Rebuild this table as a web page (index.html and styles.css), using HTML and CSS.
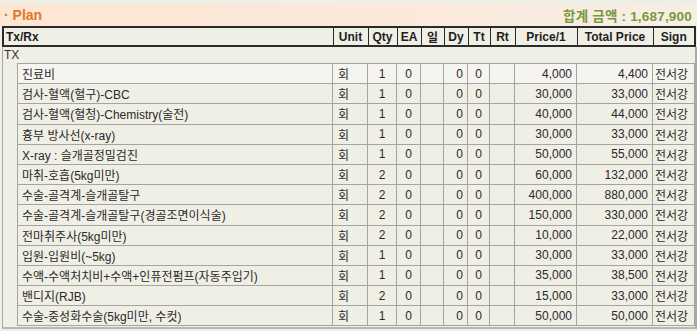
FILE: index.html
```html
<!DOCTYPE html>
<html lang="ko">
<head>
<meta charset="utf-8">
<link rel="stylesheet" href="styles.css">
</head>
<body>
<div class="panel">
  <div class="titlebar">
    <span class="title"><span class="dot">·</span> Plan</span>
    <span class="total">합계 금액 : 1,687,900</span>
  </div>
  <table class="head">
    <colgroup>
      <col class="c-name"><col class="c-unit"><col class="c-qty"><col class="c-ea"><col class="c-il"><col class="c-dy"><col class="c-tt"><col class="c-rt"><col class="c-price"><col class="c-total"><col class="c-sign">
    </colgroup>
    <tr>
      <th class="left">Tx/Rx</th><th>Unit</th><th>Qty</th><th>EA</th><th>일</th><th>Dy</th><th>Tt</th><th>Rt</th><th>Price/1</th><th>Total Price</th><th>Sign</th>
    </tr>
  </table>
  <div class="group">
    <div class="group-label">TX</div>
    <table class="items">
      <colgroup>
        <col class="c-name2"><col class="c-unit"><col class="c-qty"><col class="c-ea"><col class="c-il"><col class="c-dy"><col class="c-tt"><col class="c-rt"><col class="c-price"><col class="c-total"><col class="c-sign">
      </colgroup>
      <tbody>
        <tr class="hl"><td class="name">진료비</td><td class="unit">회</td><td class="ctr">1</td><td class="ctr">0</td><td></td><td class="num">0</td><td class="ctr">0</td><td></td><td class="num">4,000</td><td class="num">4,400</td><td class="sign">전서강</td></tr>
        <tr><td class="name">검사-혈액(혈구)-CBC</td><td class="unit">회</td><td class="ctr">1</td><td class="ctr">0</td><td></td><td class="num">0</td><td class="ctr">0</td><td></td><td class="num">30,000</td><td class="num">33,000</td><td class="sign">전서강</td></tr>
        <tr><td class="name">검사-혈액(혈청)-Chemistry(술전)</td><td class="unit">회</td><td class="ctr">1</td><td class="ctr">0</td><td></td><td class="num">0</td><td class="ctr">0</td><td></td><td class="num">40,000</td><td class="num">44,000</td><td class="sign">전서강</td></tr>
        <tr><td class="name">흉부 방사선(x-ray)</td><td class="unit">회</td><td class="ctr">1</td><td class="ctr">0</td><td></td><td class="num">0</td><td class="ctr">0</td><td></td><td class="num">30,000</td><td class="num">33,000</td><td class="sign">전서강</td></tr>
        <tr><td class="name">X-ray : 슬개골정밀검진</td><td class="unit">회</td><td class="ctr">1</td><td class="ctr">0</td><td></td><td class="num">0</td><td class="ctr">0</td><td></td><td class="num">50,000</td><td class="num">55,000</td><td class="sign">전서강</td></tr>
        <tr><td class="name">마취-호흡(5kg미만)</td><td class="unit">회</td><td class="ctr">2</td><td class="ctr">0</td><td></td><td class="num">0</td><td class="ctr">0</td><td></td><td class="num">60,000</td><td class="num">132,000</td><td class="sign">전서강</td></tr>
        <tr><td class="name">수술-골격계-슬개골탈구</td><td class="unit">회</td><td class="ctr">2</td><td class="ctr">0</td><td></td><td class="num">0</td><td class="ctr">0</td><td></td><td class="num">400,000</td><td class="num">880,000</td><td class="sign">전서강</td></tr>
        <tr><td class="name">수술-골격계-슬개골탈구(경골조면이식술)</td><td class="unit">회</td><td class="ctr">2</td><td class="ctr">0</td><td></td><td class="num">0</td><td class="ctr">0</td><td></td><td class="num">150,000</td><td class="num">330,000</td><td class="sign">전서강</td></tr>
        <tr><td class="name">전마취주사(5kg미만)</td><td class="unit">회</td><td class="ctr">2</td><td class="ctr">0</td><td></td><td class="num">0</td><td class="ctr">0</td><td></td><td class="num">10,000</td><td class="num">22,000</td><td class="sign">전서강</td></tr>
        <tr><td class="name">입원-입원비(~5kg)</td><td class="unit">회</td><td class="ctr">1</td><td class="ctr">0</td><td></td><td class="num">0</td><td class="ctr">0</td><td></td><td class="num">30,000</td><td class="num">33,000</td><td class="sign">전서강</td></tr>
        <tr><td class="name">수액-수액처치비+수액+인퓨전펌프(자동주입기)</td><td class="unit">회</td><td class="ctr">1</td><td class="ctr">0</td><td></td><td class="num">0</td><td class="ctr">0</td><td></td><td class="num">35,000</td><td class="num">38,500</td><td class="sign">전서강</td></tr>
        <tr><td class="name">밴디지(RJB)</td><td class="unit">회</td><td class="ctr">2</td><td class="ctr">0</td><td></td><td class="num">0</td><td class="ctr">0</td><td></td><td class="num">15,000</td><td class="num">33,000</td><td class="sign">전서강</td></tr>
        <tr><td class="name">수술-중성화수술(5kg미만, 수컷)</td><td class="unit">회</td><td class="ctr">1</td><td class="ctr">0</td><td></td><td class="num">0</td><td class="ctr">0</td><td></td><td class="num">50,000</td><td class="num">50,000</td><td class="sign">전서강</td></tr>
      </tbody>
    </table>
  </div>
</div>
</body>
</html>
```
FILE: styles.css
```css
html, body {
  margin: 0;
  padding: 0;
  background: #f0efe6;
}
body {
  font-family: "Liberation Sans", "Noto Sans CJK KR", sans-serif;
  font-size: 12px;
  color: #222;
}
.panel {
  width: 697px;
  height: 331px;
  overflow: hidden;
  background: #f0efe6;
}
.titlebar {
  margin-top: 4px;
  height: 22px;
  display: flex;
  align-items: center;
  justify-content: space-between;
  padding: 0 5px 0 4px;
  background: linear-gradient(to right, #fde6d3 0%, #fbe9dc 60%, #f6efe6 100%);
}
.title {
  color: #e0792a;
  font-weight: bold;
  font-size: 14px;
}
.dot {
  color: #e0792a;
  font-weight: bold;
}
.total {
  color: #7b9840;
  font-weight: bold;
  font-size: 13.5px;
  letter-spacing: 0.2px;
}
table {
  border-collapse: collapse;
  table-layout: fixed;
}
.head {
  margin-left: 2px;
  width: 693px;
  border: 2px solid #2a2a2a;
}
.head th {
  height: 17px;
  padding: 0;
  border-left: 1px solid #2a2a2a;
  font-weight: bold;
  font-size: 12px;
  text-align: center;
  color: #1e1e1e;
  white-space: nowrap;
}
.head th.left {
  text-align: left;
  padding-left: 2px;
}
.c-name { width: 330px; }
.c-name2 { width: 315px; }
.c-unit { width: 35px; }
.c-qty { width: 29px; }
.c-ea { width: 24px; }
.c-il { width: 23px; }
.c-dy { width: 24px; }
.c-tt { width: 22px; }
.c-rt { width: 25px; }
.c-price { width: 62px; }
.c-total { width: 76px; }
.c-sign { width: 42px; }
.group {
  margin-left: 2px;
  width: 692px;
  border-left: 1px solid #a9a9a3;
  border-right: 2px solid #a9a9a3;
  border-bottom: 2px solid #b9b9b3;
  padding-bottom: 1px;
}
.group-label {
  height: 16px;
  line-height: 16px;
  padding-left: 1px;
  color: #333;
}
.items {
  margin-left: 14px;
  width: 678px;
}
.items td {
  height: 19.2px;
  padding: 0;
  border: 1px solid #a4a4a0;
  white-space: nowrap;
  overflow: hidden;
  color: #2a2a2a;
}
.items tr.hl td {
  background: #f5f4f0;
}
.items td.name { padding-left: 4px; }
.items td.unit { padding-left: 5px; }
.items td.ctr { text-align: center; }
.items td.num { text-align: right; padding-right: 4px; }
.items td.sign { padding-left: 2px; }
```
